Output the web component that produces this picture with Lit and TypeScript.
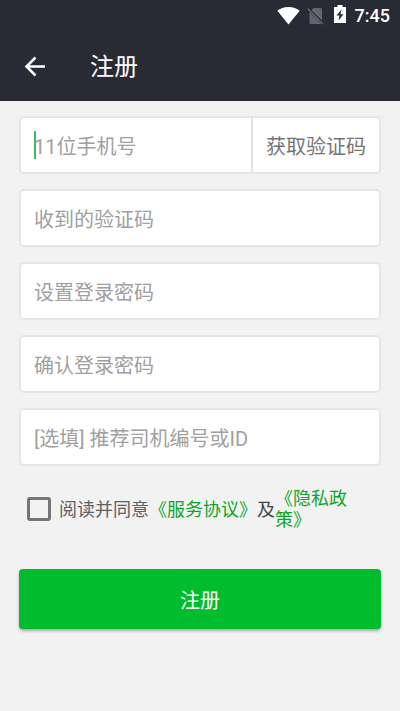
import { LitElement, html, css } from "lit";
import { customElement, state } from "lit/decorators.js";

interface Field {
  id: string;
  type: string;
  label: string;
}

const FIELDS: Field[] = [
  { id: "code", type: "text", label: "收到的验证码" },
  { id: "password", type: "password", label: "设置登录密码" },
  { id: "confirm", type: "password", label: "确认登录密码" },
  { id: "referrer", type: "text", label: "[选填] 推荐司机编号或ID" },
];

@customElement("status-bar")
class StatusBar extends LitElement {
  static styles = css`
    :host {
      display: flex;
      justify-content: flex-end;
      align-items: center;
      height: 32px;
      padding-right: 10px;
      color: #fff;
      font: 500 18px/32px Roboto, sans-serif;
    }
    svg {
      display: block;
      flex: none;
    }
    .wifi {
      margin-right: 7px;
    }
    .sim {
      margin-right: 10px;
    }
    .battery {
      margin-right: 9px;
      margin-bottom: 4px;
    }
  `;

  render() {
    return html`
      <svg class="wifi" width="23" height="18" viewBox="0 0 23 18" aria-hidden="true">
        <path fill="#fff" d="M11.5 17.500 0.300 3.800C3.200 1.500 7 0 11.500 0s8.300 1.500 11.200 3.800z" />
      </svg>
      <svg class="sim" width="17" height="18" viewBox="0 0 17 18" aria-hidden="true">
        <path fill="#63666d" d="M6.500 1H13.500Q15 1 15 2.500V13.500L4.500 3zM2.500 5 14.300 17H4Q2.500 17 2.500 15.500z" />
        <path stroke="#63666d" stroke-width="1.500" d="M0.700 1.500 16 17.300" />
      </svg>
      <svg class="battery" width="12" height="18" viewBox="0 0 12 18" aria-hidden="true">
        <path fill="#fff" d="M3.500 0h5v2H12v16H0V2h3.500z" />
        <path fill="#282b34" d="M7.500 4.500 2.500 10.500H5.500L4.500 15.500 9.500 9.200H6.500z" />
      </svg>
      <span>7:45</span>
    `;
  }
}

@customElement("app-root")
class AppRoot extends LitElement {
  @state() private phone = "";

  static styles = css`
    :host {
      display: block;
      min-height: 100vh;
      background: #f2f2f2;
      font-family: Roboto, "Noto Sans CJK SC", sans-serif;
      color: #444;
    }
    * {
      box-sizing: border-box;
    }
    .top {
      background: #282b34;
    }
    .bar {
      display: flex;
      align-items: center;
      gap: 42px;
      height: 69px;
      padding: 0 22px;
    }
    button {
      font: inherit;
      border: 0;
      cursor: pointer;
    }
    .back {
      display: flex;
      padding: 0;
      background: none;
    }
    h1 {
      margin: 0;
      color: #fff;
      font-size: 24px;
      line-height: 32px;
      font-weight: 400;
    }
    form {
      display: flex;
      flex-direction: column;
      gap: 15px;
      padding: 15px 19px;
    }
    .field {
      position: relative;
      display: flex;
      height: 58px;
      background: #fff;
      border: 2px solid #e5e5e5;
      border-radius: 5px;
      font-size: 20px;
    }
    input.text {
      flex: 1;
      min-width: 0;
      padding: 4px 13px 0;
      border: 0;
      outline: 0;
      background: none;
      font: inherit;
      color: #333;
      caret-color: #1fb14c;
    }
    input.text::placeholder {
      color: #a0a0a0;
      opacity: 1;
    }
    .caret {
      position: absolute;
      left: 13px;
      top: 13px;
      width: 2px;
      height: 28px;
      background: #3fb95f;
    }
    .send {
      flex: none;
      padding: 0 13px;
      background: none;
      border-left: 2px solid #e5e5e5;
      color: #757575;
    }
    .agree {
      display: flex;
      align-items: center;
      margin: 7px 0 24px;
      padding-left: 8px;
      font-size: 18px;
      line-height: 21px;
      text-spacing-trim: space-all;
    }
    .agree input {
      flex: none;
      appearance: none;
      width: 24px;
      height: 24px;
      margin: 0 8px 0 0;
      border: 3px solid #757575;
      border-radius: 3px;
    }
    .agree input:checked {
      background: #00bd2e;
    }
    .agree label,
    .agree .and,
    .agree .terms {
      flex: none;
    }
    .agree label {
      color: #606060;
    }
    a {
      color: #0da52c;
      text-decoration: none;
    }
    .submit {
      height: 60px;
      border-radius: 4px;
      background: #00bd2e;
      box-shadow: 0 2px 3px rgba(0, 0, 0, 0.3);
      color: #fff;
      font-size: 20px;
    }
  `;

  private onPhone(e: Event) {
    this.phone = (e.target as HTMLInputElement).value;
  }

  render() {
    return html`
      <header class="top">
        <status-bar></status-bar>
        <div class="bar">
          <button class="back" aria-label="返回">
            <svg width="26" height="26" viewBox="0 0 26 26" fill="none" stroke="#fff" stroke-width="2.500">
              <path d="M23 12.500H5M13.500 3.500 4.500 12.500 13.500 21.500" />
            </svg>
          </button>
          <h1>注册</h1>
        </div>
      </header>
      <form @submit=${(e: Event) => e.preventDefault()}>
        <div class="field">
          <input class="text" type="tel" aria-label="11位手机号" placeholder="11位手机号" @input=${this.onPhone} />
          ${this.phone ? "" : html`<span class="caret"></span>`}
          <button class="send" type="button">获取验证码</button>
        </div>
        ${FIELDS.map(
          (f) => html`<div class="field">
            <input class="text" id=${f.id} type=${f.type} aria-label=${f.label} placeholder=${f.label} />
          </div>`
        )}
        <div class="agree">
          <input id="agree" type="checkbox" />
          <label for="agree">阅读并同意</label>
          <a class="terms" href="#terms">《服务协议》</a>
          <span class="and">及</span>
          <a href="#privacy">《隐私政策》</a>
        </div>
        <button class="submit" type="submit">注册</button>
      </form>
    `;
  }
}
